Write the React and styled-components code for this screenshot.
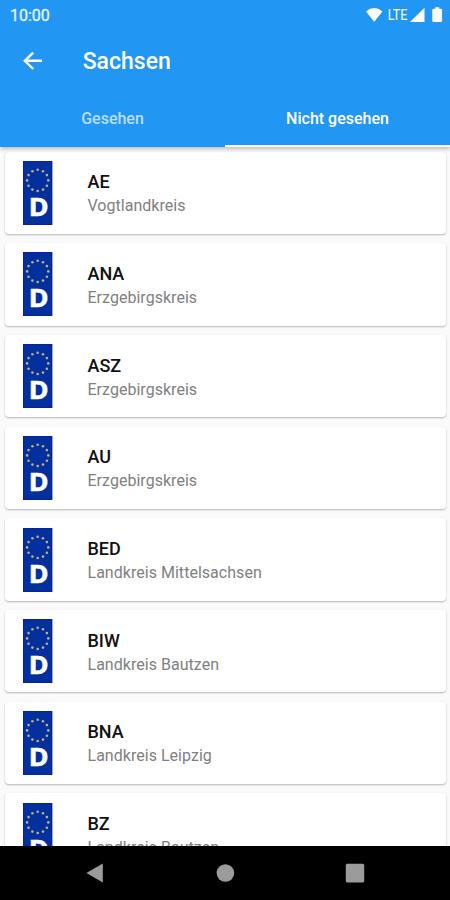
import React, { Component } from 'react'
import styled, { createGlobalStyle } from 'styled-components'

const districts = [
  { code: 'AE', name: 'Vogtlandkreis' },
  { code: 'ANA', name: 'Erzgebirgskreis' },
  { code: 'ASZ', name: 'Erzgebirgskreis' },
  { code: 'AU', name: 'Erzgebirgskreis' },
  { code: 'BED', name: 'Landkreis Mittelsachsen' },
  { code: 'BIW', name: 'Landkreis Bautzen' },
  { code: 'BNA', name: 'Landkreis Leipzig' },
  { code: 'BZ', name: 'Landkreis Bautzen' },
]

const stars = Array.from({ length: 12 }, (_, i) => {
  const angle = (i * Math.PI) / 6
  return { x: 14.7 + 10.6 * Math.sin(angle), y: 19.4 - 10.6 * Math.cos(angle) }
})

const Plate = () => (
  <PlateSvg viewBox="0 0 29.4 64">
    <rect width="29.4" height="64" fill="#0a1fa0" />
    <rect x="1" y="1" width="27.4" height="62" fill="#03309c" />
    {stars.map((star, i) => (
      <circle key={i} cx={star.x} cy={star.y} r="1.3" fill="#c4ae84" />
    ))}
    <PlateLetter x="5.7" y="55.4" textLength="19.8" lengthAdjust="spacingAndGlyphs">D</PlateLetter>
  </PlateSvg>
)

class App extends Component {
  render() {
    return (
      <Screen>
        <GlobalStyle />
        <Header>
          <StatusBar>
            <Clock>10:00</Clock>
            <StatusIcons viewBox="0 0 78 18">
              <path d="M1 4.4Q9.2-2.4 17.4 4.4L9.2 14.8Z" />
              <NetworkLabel x="22.8" y="13.4" textLength="19.6" lengthAdjust="spacingAndGlyphs">LTE</NetworkLabel>
              <path d="M59.5 0.8V15H45Z" />
              <path d="M70.2 0.2h4v1.6h1.4q1.5 0 1.5 1.3v10.6q0 1.3-1.5 1.3h-6.8q-1.5 0-1.5-1.3V3.1q0-1.3 1.5-1.3H70.2Z" />
            </StatusIcons>
          </StatusBar>
          <Toolbar>
            <BackIcon viewBox="0 0 20 20">
              <path d="M19 9.8H2.2M10.2 1.6L1.8 9.8L10.2 18" />
            </BackIcon>
            <Title>Sachsen</Title>
          </Toolbar>
          <Tabs>
            <Tab>Gesehen</Tab>
            <Tab $active>Nicht gesehen</Tab>
          </Tabs>
        </Header>
        <List>
          {districts.map(({ code, name }) => (
            <Card key={code}>
              <Plate />
              <CardText>
                <Code>{code}</Code>
                <District>{name}</District>
              </CardText>
            </Card>
          ))}
        </List>
        <NavigationBar>
          <NavIcon viewBox="0 0 20 20">
            <path d="M1.4 10L17.8 0.6V19.4Z" />
          </NavIcon>
          <NavIcon viewBox="0 0 20 20">
            <circle cx="10.4" cy="10" r="8.8" />
          </NavIcon>
          <NavIcon viewBox="0 0 20 20">
            <rect x="0.8" y="0.8" width="18.4" height="18.6" rx="1.5" />
          </NavIcon>
        </NavigationBar>
      </Screen>
    )
  }
}

const GlobalStyle = createGlobalStyle`
  body {
    margin: 0;
  }

  * {
    box-sizing: border-box;
  }
`

const Screen = styled.div`
  font-family: Roboto, sans-serif;
  display: flex;
  flex-direction: column;
  width: 450px;
  height: 900px;
  overflow: hidden;
  background-color: #fafafa;
`

const Header = styled.header`
  position: relative;
  flex: none;
  height: 146.5px;
  color: #fff;
  background-color: #2196f3;
  box-shadow: 0 2px 4px rgba(0, 0, 0, 0.25);
`

const StatusBar = styled.div`
  display: flex;
  align-items: center;
  justify-content: space-between;
  height: 29px;
  padding: 0 7px 0 10px;
`

const Clock = styled.span`
  padding-top: 1px;
  font-size: 16px;
  line-height: 29px;
  color: #e8f4fe;
  -webkit-text-stroke: 0.3px #e8f4fe;
`

const StatusIcons = styled.svg`
  width: 78px;
  height: 18px;
  margin-top: 2px;
  fill: #fff;
`

const NetworkLabel = styled.text`
  font-size: 15px;
`

const Toolbar = styled.div`
  display: flex;
  align-items: center;
  height: 64px;
  padding-left: 22.5px;
`

const BackIcon = styled.svg`
  width: 20px;
  height: 20px;
  fill: none;
  stroke: #fff;
  stroke-width: 2.4;
`

const Title = styled.h1`
  margin: 0 0 0 40.2px;
  padding-top: 2px;
  font-size: 23px;
  font-weight: 500;
  line-height: 30px;
`

const Tabs = styled.div`
  display: flex;
  height: 53.5px;
`

const Tab = styled.div`
  flex: 1;
  padding-top: 15px;
  border-bottom: 2.5px solid ${({ $active }) => ($active ? '#fff' : 'transparent')};
  font-size: 16px;
  font-weight: 500;
  line-height: 22px;
  text-align: center;
  color: ${({ $active }) => ($active ? '#fff' : 'rgba(255, 255, 255, 0.7)')};
`

const List = styled.main`
  display: flex;
  flex: 1;
  flex-direction: column;
  gap: 9.2px;
  min-height: 0;
  padding: 5px 4.5px 0 5.3px;
  overflow: hidden;
`

const Card = styled.div`
  display: flex;
  flex: none;
  align-items: center;
  height: 82.5px;
  padding-left: 18px;
  border-radius: 4px;
  background-color: #fff;
  box-shadow: 0 1px 2px rgba(0, 0, 0, 0.28);
`

const PlateSvg = styled.svg`
  width: 29.4px;
  height: 64px;
`

const PlateLetter = styled.text`
  font-family: 'Open Sans', sans-serif;
  font-size: 25px;
  font-weight: 700;
  fill: #fff;
  stroke: #fff;
  stroke-width: 0.6px;
`

const CardText = styled.div`
  margin-left: 34.8px;
  padding-top: 3px;
`

const Code = styled.div`
  font-size: 18px;
  font-weight: 500;
  line-height: 24px;
  color: #111;
`

const District = styled.div`
  font-size: 16px;
  line-height: 24px;
  letter-spacing: 0.03px;
  color: #808080;
`

const NavigationBar = styled.nav`
  display: flex;
  flex: none;
  align-items: center;
  justify-content: center;
  gap: 110px;
  height: 54px;
  background-color: #000;
`

const NavIcon = styled.svg`
  width: 20px;
  height: 20px;
  fill: #9b9b9b;
`

export default App
